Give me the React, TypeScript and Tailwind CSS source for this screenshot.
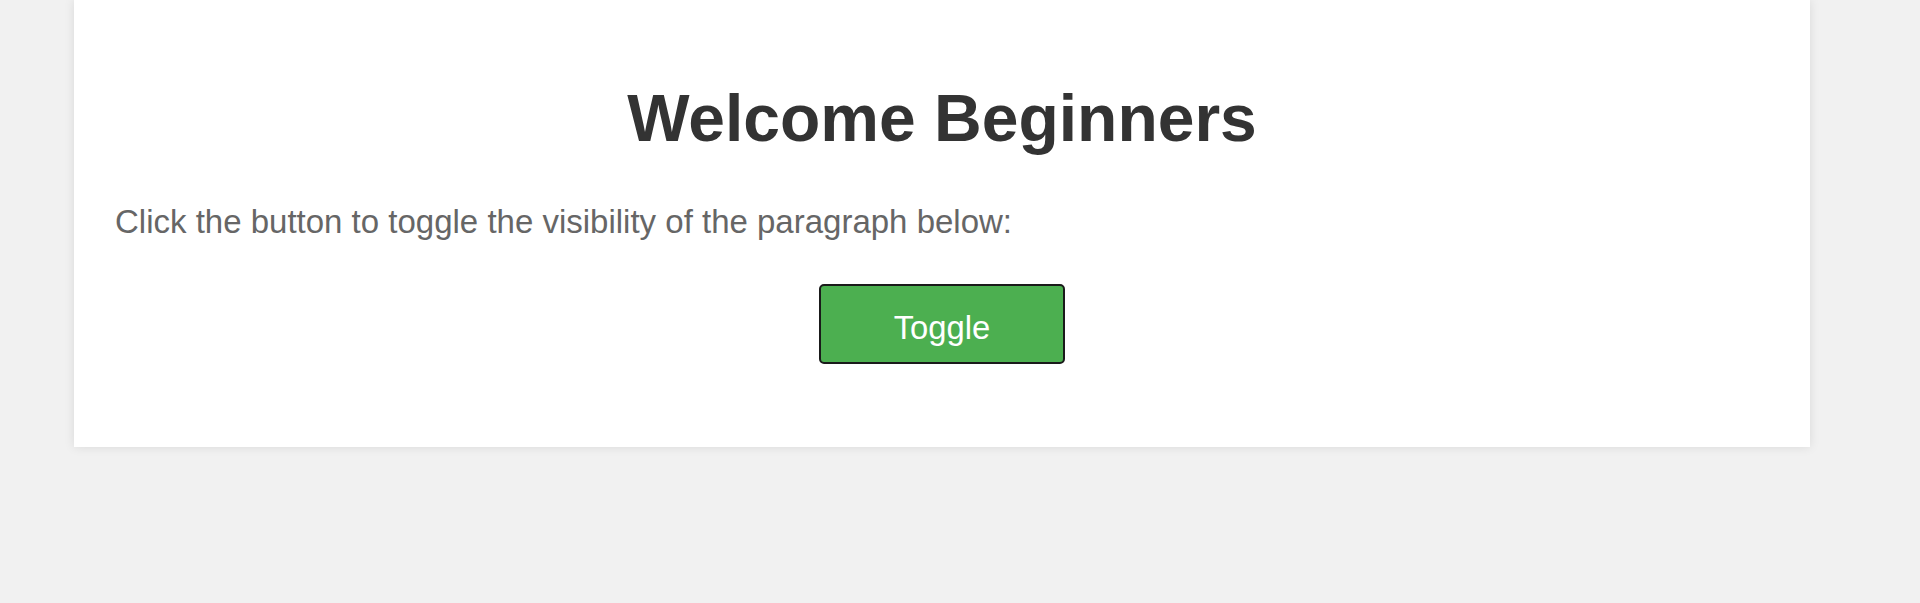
import React, { useState } from "react";

export default function App() {
  const [visible, setVisible] = useState(false);
  return (
    <div className="min-h-[603px] w-full bg-[#f1f1f1] font-['Liberation_Sans',Arial,sans-serif] overflow-hidden">
      <div className="ml-[74px] w-[1736px] bg-white shadow-[0_0_10px_rgba(0,0,0,0.1)] px-[41px] pt-[80px] pb-[83px]">
        <h1 className="m-0 text-center text-[66px] leading-[76px] font-bold text-[#333333]">
          Welcome Beginners
        </h1>
        <p className="mt-[47px] mb-0 text-[33px] leading-[38px] text-[#666666]">
          Click the button to toggle the visibility of the paragraph below:
        </p>
        {visible && (
          <p className="mt-4 text-[33px] leading-[38px] text-[#666666]">
            This is the paragraph that can be toggled.
          </p>
        )}
        <div className="mt-[43px] flex justify-center">
          <button
            onClick={() => setVisible(!visible)}
            className="w-[246px] h-[80px] rounded-[5px] border-2 border-[#1a1a1a] bg-[#4caf50] text-white text-[32.8px] leading-none flex items-center justify-center pt-[9px]"
          >
            Toggle
          </button>
        </div>
      </div>
    </div>
  );
}
